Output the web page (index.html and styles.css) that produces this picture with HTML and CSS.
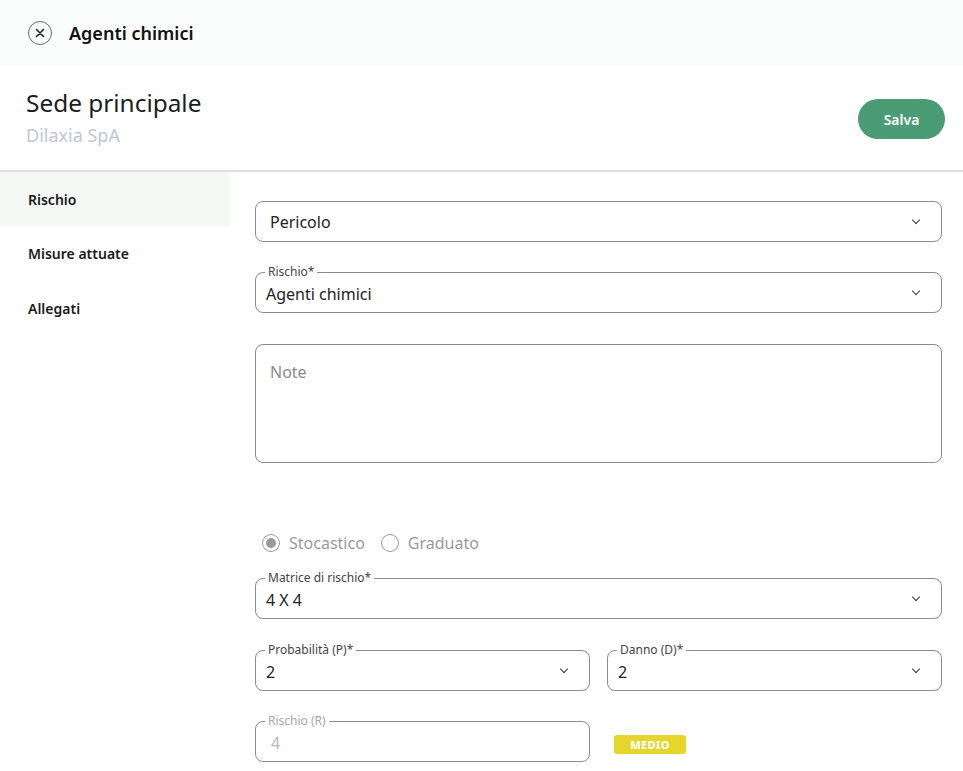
FILE: index.html
```html
<!DOCTYPE html>
<html lang="it">

<head>
  <meta charset="UTF-8">
  <meta name="viewport" content="width=device-width, initial-scale=1.0">
  <title>Agenti chimici</title>
  <link rel="stylesheet" href="styles.css">
</head>

<body>
  <header class="topbar">
    <span class="close">
      <svg width="14" height="14" viewBox="0 0 14 14"><path d="M3.5 3.5 L10.5 10.5 M10.5 3.5 L3.5 10.5" stroke="#222" stroke-width="1.6" stroke-linecap="round" fill="none"/></svg>
    </span>
    <span class="topbar-title">Agenti chimici</span>
  </header>

  <section class="head">
    <div>
      <h1>Sede principale</h1>
      <p class="company">Dilaxia SpA</p>
    </div>
    <button class="save">Salva</button>
  </section>

  <main class="layout">
    <nav class="side">
      <a class="side-item active">Rischio</a>
      <a class="side-item">Misure attuate</a>
      <a class="side-item">Allegati</a>
    </nav>

    <div class="form">
      <div class="field">
        <span class="value plain">Pericolo</span>
        <span class="chev"></span>
      </div>

      <div class="field">
        <span class="label">Rischio*</span>
        <span class="value">Agenti chimici</span>
        <span class="chev"></span>
      </div>

      <div class="field note">
        <span class="value plain muted">Note</span>
      </div>

      <div class="radios">
        <label class="radio checked"><span class="dot"></span>Stocastico</label>
        <label class="radio"><span class="dot"></span>Graduato</label>
      </div>

      <div class="field matrix">
        <span class="label">Matrice di rischio*</span>
        <span class="value">4 X 4</span>
        <span class="chev"></span>
      </div>

      <div class="row">
        <div class="field">
          <span class="label">Probabilità (P)*</span>
          <span class="value">2</span>
          <span class="chev"></span>
        </div>
        <div class="field">
          <span class="label">Danno (D)*</span>
          <span class="value">2</span>
          <span class="chev"></span>
        </div>
      </div>

      <div class="row">
        <div class="field disabled">
          <span class="label">Rischio (R)</span>
          <span class="value">4</span>
        </div>
        <div class="level">
          <span class="badge">MEDIO</span>
        </div>
      </div>
    </div>
  </main>
</body>

</html>
```

FILE: styles.css
```css
body {
  margin: 0;
  font-family: "Noto Sans", "Open Sans", sans-serif;
  color: #1d1d1f;
  background: #fff;
}

.topbar {
  height: 66px;
  display: flex;
  align-items: center;
  padding-left: 28px;
  gap: 17px;
  background: #fbfdfc;
}

.close {
  width: 22px;
  height: 22px;
  border: 1.5px solid #6a6a6a;
  border-radius: 50%;
  display: flex;
  align-items: center;
  justify-content: center;
}

.topbar-title {
  font-size: 18px;
  font-weight: 600;
  color: #111;
}

.head {
  height: 104px;
  display: flex;
  justify-content: space-between;
  align-items: flex-start;
  padding: 0 18px 0 26px;
  border-bottom: 2px solid #dedee4;
}

.head h1 {
  margin: 20px 0 0;
  font-size: 24.4px;
  font-weight: 400;
  line-height: 34px;
}

.company {
  margin: 3px 0 0;
  font-size: 18px;
  line-height: 24px;
  color: #c2c6d2;
}

.save {
  margin-top: 33px;
  width: 87px;
  height: 40px;
  border: none;
  border-radius: 20px;
  background: #4b9b74;
  color: #fff;
  font: 600 14px "Noto Sans", sans-serif;
}

.layout {
  display: grid;
  grid-template-columns: 230px 1fr;
}

.side {
  display: flex;
  flex-direction: column;
}

.side-item {
  height: 54px;
  display: flex;
  align-items: center;
  padding-left: 28px;
  font-size: 14px;
  font-weight: 600;
  color: #1a1a1a;
}

.side-item.active {
  background: #f5f9f6;
}

.side-item + .side-item {
  height: 55px;
}

.form {
  padding: 29px 21px 0 25px;
  display: flex;
  flex-direction: column;
  gap: 30px;
}

.field {
  position: relative;
  height: 39px;
  border: 1px solid #8c8c8f;
  border-radius: 8px;
  display: flex;
  align-items: center;
  padding: 0 11px 0 10px;
}

.label {
  position: absolute;
  left: 9px;
  top: -9px;
  padding: 0 3px;
  background: #fff;
  font-size: 12px;
  line-height: 15px;
  color: #444;
}

.value {
  flex: 1;
  font-size: 16px;
  color: #222;
  padding-top: 2px;
}

.value.plain {
  padding: 0 0 0 4px;
}

.muted {
  color: #8a8a8e;
}

.chev {
  width: 5px;
  height: 5px;
  border-right: 1.8px solid #3a3a3a;
  border-bottom: 1.8px solid #3a3a3a;
  transform: rotate(45deg);
  margin: -3px 11px 0 0;
}

.note {
  margin-top: 1px;
  align-items: flex-start;
  padding-top: 16px;
  box-sizing: border-box;
  height: 119px;
}

.radios {
  margin-top: 39px;
  margin-bottom: -6px;
  display: flex;
  gap: 16px;
  padding-left: 7px;
  height: 22px;
  align-items: center;
}

.matrix {
  margin-bottom: 1px;
}

.radio {
  display: flex;
  align-items: center;
  gap: 9px;
  font-size: 16px;
  color: #9a9a9d;
}

.dot {
  width: 16px;
  height: 16px;
  border: 1.5px solid #9a9a9d;
  border-radius: 50%;
  display: flex;
  align-items: center;
  justify-content: center;
}

.radio.checked .dot::after {
  content: "";
  width: 10px;
  height: 10px;
  border-radius: 50%;
  background: #9a9a9d;
}

.row {
  display: grid;
  grid-template-columns: 1fr 1fr;
  gap: 17px;
}

.disabled .label {
  color: #a6a6aa;
}

.disabled .value {
  color: #b4b8c6;
  padding-left: 5px;
}

.level {
  display: flex;
  align-items: center;
  padding: 5px 0 0 7px;
}

.badge {
  width: 72px;
  height: 19px;
  border-radius: 3px;
  background: #e4d62b;
  color: #fff;
  font-size: 11px;
  font-weight: 800;
  letter-spacing: 0.3px;
  display: flex;
  align-items: center;
  justify-content: center;
}
```
